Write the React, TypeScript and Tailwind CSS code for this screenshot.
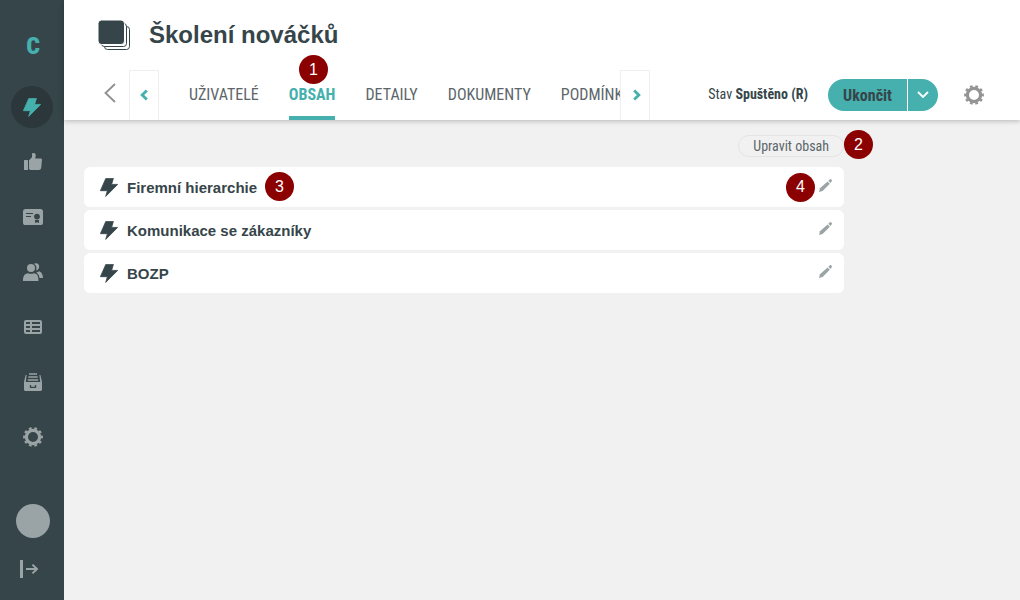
import { useState } from "react";
import type { ReactNode } from "react";

const tabs = ["UŽIVATELÉ", "OBSAH", "DETAILY", "DOKUMENTY", "PODMÍNKY"];

const courses = ["Firemní hierarchie", "Komunikace se zákazníky", "BOZP"];

const BoltIcon = ({ className }: { className?: string }) => (
  <svg viewBox="0 0 18 19" fill="currentColor" className={className}>
    <path
      d="M5.8 .4H13.4L11.6 6.4H17.7L5.7 18.4L7.4 12.7H.4Z"
      stroke="currentColor"
      strokeWidth="0.8"
      strokeLinejoin="round"
    />
  </svg>
);

const GearIcon = ({ className }: { className?: string }) => (
  <svg viewBox="0 0 20 20" fill="none" stroke="currentColor" className={className}>
    <circle cx="10" cy="10" r="6.6" strokeWidth="3.2" />
    <circle
      cx="10"
      cy="10"
      r="8.7"
      strokeWidth="2.4"
      pathLength="100"
      strokeDasharray="5 5"
      strokeDashoffset="2.5"
    />
  </svg>
);

const ThumbIcon = () => (
  <svg viewBox="0 0 18 17" fill="currentColor" className="h-[17px] w-[18px]">
    <rect y="7" width="4" height="10" rx="0.6" />
    <path d="M5 7.2L8 4.3V1Q8 0 9 0H10Q11.8 .4 11.8 2.6L11.2 5.4H16.8Q18 5.4 18 6.8L17.2 15Q16.8 17 15 17H7Q5.6 17 5 16Z" />
  </svg>
);

const CertificateIcon = () => (
  <svg viewBox="0 0 20 16" className="h-4 w-5">
    <rect width="20" height="16" rx="2.6" fill="currentColor" />
    <path d="M3 4.5H10M3 7.5H8" stroke="#364549" strokeWidth="1.2" />
    <circle cx="14" cy="7.6" r="2.9" fill="#364549" />
    <path d="M12 11H16V14L14 13.2L12 14Z" fill="#364549" />
  </svg>
);

const UsersIcon = () => (
  <svg viewBox="0 0 20 18" fill="currentColor" className="h-[18px] w-5">
    <path d="M11 .6Q15.6-.8 16.2 3.2Q16.2 6.6 13 7.4Q14.4 3.4 11 .6Z" />
    <path d="M13.4 9.4L16.4 8.2Q19.8 9.8 20 15H16.6Q16.2 11.4 13.4 9.4Z" />
    <circle cx="8" cy="5" r="4" />
    <path d="M0 18V16Q.6 10.4 5 10.2Q8 11.4 11 10.2Q15 10.4 15.4 16V18Z" />
  </svg>
);

const TableIcon = () => (
  <svg viewBox="0 0 18 14" className="h-3.5 w-[18px]">
    <rect width="18" height="14" rx="2" fill="currentColor" />
    <path
      d="M2 3H6M8 3H16M2 7H6M8 7H16M2 11H6M8 11H16"
      stroke="#364549"
      strokeWidth="2"
    />
  </svg>
);

const ArchiveIcon = () => (
  <svg viewBox="0 0 18 18" className="h-[18px] w-[18px]">
    <path
      d="M0 9L1.6 2H2.6L1.8 9H16.2L15.4 2H16.4L18 9V16.4Q18 18 16.4 18H1.6Q0 18 0 16.4Z"
      fill="currentColor"
    />
    <path d="M5 1H13M4.4 4H13.6M3.8 7H14.2" stroke="currentColor" strokeWidth="1.6" />
    <path d="M6.5 12V14.4H11.5V12" fill="none" stroke="#364549" strokeWidth="1.3" />
  </svg>
);

const LogoutIcon = () => (
  <svg viewBox="0 0 18 18" fill="none" stroke="currentColor" className="h-[18px] w-[18px]">
    <path d="M1.5 0V18" strokeWidth="3" />
    <path d="M6 9H17M12.4 4.6L17 9L12.4 13.4" strokeWidth="2" />
  </svg>
);

const PencilIcon = () => (
  <svg viewBox="0 0 13 13" fill="currentColor" className="size-[13px]">
    <path d="M0 13L1 9.3L8.6 2.4L10.8 4.8L3.6 12Z" />
    <path d="M9.3 1.8L11 .3Q11.8-.2 12.6 .7Q13.3 1.5 12.6 2.4L11.5 4.1Z" />
  </svg>
);

const StackIcon = () => (
  <svg viewBox="0 0 32 30" className="h-[30px] w-8">
    <rect x="6.5" y="6.5" width="25" height="23" rx="3" fill="white" stroke="#364549" />
    <rect x="3.5" y="3.5" width="25" height="23" rx="3" fill="white" stroke="#364549" />
    <rect width="26.5" height="24.5" rx="3.5" fill="#364549" stroke="white" strokeWidth="1" />
  </svg>
);

const ArrowIcon = ({ path }: { path: string }) => (
  <svg viewBox="0 0 8 12" fill="none" stroke="currentColor" strokeWidth="2.8" className="h-3 w-2">
    <path d={path} />
  </svg>
);

const Badge = ({ children, className = "" }: { children: ReactNode; className?: string }) => (
  <span
    className={`absolute z-10 flex size-[29px] items-center justify-center rounded-full bg-[#8b0000] font-['Liberation_Sans',sans-serif] text-base font-normal text-white ${className}`}
  >
    {children}
  </span>
);

const navItems = [
  { label: "Hodnocení", icon: <ThumbIcon /> },
  { label: "Certifikáty", icon: <CertificateIcon /> },
  { label: "Uživatelé", icon: <UsersIcon /> },
  { label: "Přehledy", icon: <TableIcon /> },
  { label: "Archiv", icon: <ArchiveIcon /> },
  { label: "Nastavení", icon: <GearIcon className="size-5" /> },
];

const Sidebar = () => (
  <aside className="flex w-16 shrink-0 flex-col items-center justify-between bg-[#364549] pb-[22px] text-[#9aa3a5]">
    <nav className="flex flex-col items-center">
      <a
        href="#"
        className="mt-7 flex h-9 items-center pl-0.5 text-2xl font-black text-[#45b0ad]"
      >
        C
      </a>
      <a
        href="#"
        aria-label="Školení"
        className="mt-[22px] mb-1.5 flex size-[42px] items-center justify-center rounded-full bg-[#2b373a] text-[#45b0ad]"
      >
        <BoltIcon className="h-[19px] w-[18px]" />
      </a>
      {navItems.map((item) => (
        <a
          key={item.label}
          href="#"
          aria-label={item.label}
          className="flex h-[55px] w-12 items-center justify-center pl-0.5"
        >
          {item.icon}
        </a>
      ))}
    </nav>
    <div className="flex flex-col items-center gap-[22px] pl-0.5">
      <button aria-label="Profil" className="size-[34px] rounded-full bg-[#9aa3a5]" />
      <button aria-label="Odhlásit" className="pr-2">
        <LogoutIcon />
      </button>
    </div>
  </aside>
);

const App = () => {
  const [activeTab, setActiveTab] = useState("OBSAH");

  return (
    <div className="flex min-h-screen bg-[#f1f1f1] font-['Roboto_Condensed','Liberation_Sans_Narrow',sans-serif] text-[#364549]">
      <Sidebar />

      <div className="min-w-0 flex-1">
        <header className="bg-white shadow-[0_1px_5px_rgba(0,0,0,0.25)]">
          <div className="flex h-[70px] items-center gap-[19px] pl-[34px]">
            <StackIcon />
            <h1 className="font-['Liberation_Sans',sans-serif] text-2xl font-bold">
              Školení nováčků
            </h1>
          </div>

          {/* Tabs & status */}
          <div className="flex h-[50px] items-stretch pr-9 pl-10">
            <button aria-label="Zpět" className="w-[25px] pb-1 text-[#8f8f8f]">
              <svg viewBox="0 0 12 20" fill="none" stroke="currentColor" strokeWidth="1.8" className="h-5 w-3">
                <path d="M11 1L1.5 10L11 19" />
              </svg>
            </button>
            <button
              aria-label="Předchozí"
              className="flex w-[30px] items-center justify-center border border-b-0 border-[#efefef] pb-0.5 text-[#45b0ad]"
            >
              <ArrowIcon path="M6.8 1.6L2.2 6L6.8 10.4" />
            </button>
            <div className="relative w-[461px] min-w-0">
              <div role="tablist" className="flex h-full gap-[30px] overflow-hidden pl-[30px]">
                {tabs.map((tab) => (
                  <button
                    key={tab}
                    role="tab"
                    aria-selected={tab === activeTab}
                    onClick={() => setActiveTab(tab)}
                    className={`shrink-0 border-y-4 border-t-transparent text-base ${
                      tab === activeTab
                        ? "border-b-[#45b0ad] font-bold text-[#45b0ad]"
                        : "border-b-transparent text-[#5c666a]"
                    }`}
                  >
                    {tab}
                  </button>
                ))}
              </div>
              <Badge className="-top-[15px] left-[140px]">1</Badge>
            </div>
            <button
              aria-label="Další"
              className="flex w-[30px] items-center justify-center border border-b-0 border-[#efefef] pb-0.5 pl-1 text-[#45b0ad]"
            >
              <ArrowIcon path="M1.2 1.6L5.8 6L1.2 10.4" />
            </button>

            <div className="ml-auto flex items-center">
              <p className="pb-0.5 text-sm whitespace-nowrap">
                Stav <b>Spuštěno (R)</b>
              </p>
              <div className="ml-5 flex h-8 gap-px">
                <button className="w-[79px] rounded-l-full bg-[#45b0ad] pt-0.5 text-base font-bold">
                  Ukončit
                </button>
                <button
                  aria-label="Další akce"
                  className="flex w-[30px] items-center justify-center rounded-r-full bg-[#45b0ad] pb-0.5 text-white"
                >
                  <svg viewBox="0 0 12 7" fill="none" stroke="currentColor" strokeWidth="1.8" className="h-[7px] w-3">
                    <path d="M1 1L6 6L11 1" />
                  </svg>
                </button>
              </div>
              <button aria-label="Nastavení školení" className="ml-[26px] text-[#949494]">
                <GearIcon className="size-5" />
              </button>
            </div>
          </div>
        </header>

        <main className="max-w-[780px] pt-[15px] pl-5">
          <div className="relative flex justify-end">
            <button className="h-[22px] rounded-full border border-[#e4e4e4] px-3.5 pb-0.5 text-sm leading-5 text-[#5c666a]">
              Upravit obsah
            </button>
            <Badge className="-top-[5px] -right-[29px]">2</Badge>
          </div>

          {/* Course list */}
          <ul className="mt-2.5 flex flex-col gap-[3px]">
            {courses.map((course, index) => (
              <li
                key={course}
                className="relative flex h-10 items-center rounded-md bg-white pr-3 pl-4"
              >
                <BoltIcon className="h-[19px] w-[18px]" />
                <a
                  href="#"
                  className="relative ml-[9px] pt-0.5 font-['Liberation_Sans',sans-serif] text-[15px] leading-5 font-bold"
                >
                  {course}
                  {index === 0 && <Badge className="-top-1 left-full ml-2">3</Badge>}
                </a>
                <button aria-label={`Upravit ${course}`} className="relative ml-auto pb-1">
                  <span className="text-[#9aa3a5]">
                    <PencilIcon />
                  </span>
                  {index === 0 && <Badge className="-top-1.5 right-full mr-1">4</Badge>}
                </button>
              </li>
            ))}
          </ul>
        </main>
      </div>
    </div>
  );
};

export default App;
